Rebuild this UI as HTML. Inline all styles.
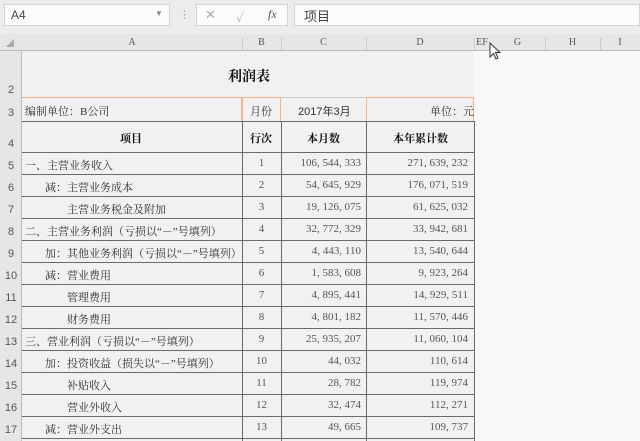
<!DOCTYPE html><html><head><meta charset="utf-8"><style>
*{margin:0;padding:0;box-sizing:border-box}
body{width:640px;height:441px;overflow:hidden;background:#f1f1f1;font-family:"Liberation Sans","Noto Sans CJK SC",sans-serif;position:relative}
.a{position:absolute}
.t{position:absolute;font-size:11px;color:#333;white-space:nowrap;font-family:"Liberation Serif","Noto Serif CJK SC",serif}
.hl{position:absolute;height:1px;background:#6a6a6a}
.vl{position:absolute;width:1px;background:#6a6a6a}
.rn{position:absolute;left:0;width:22px;font-size:11px;color:#555;text-align:center}
.ch{position:absolute;top:37px;font-size:10px;color:#555;text-align:center;font-family:"Liberation Serif",serif}
</style></head><body>
<!-- toolbar -->
<div class="a" style="left:0;top:0;width:640px;height:34px;background:#ececec"></div>
<div class="a" style="left:4px;top:4px;width:166px;height:22px;background:#fbfbfb;border:1px solid #d4d4d4"></div>
<div class="t" style="left:11px;top:8px;font-family:'Liberation Sans';font-size:12px;color:#444">A4</div>
<div class="t" style="left:155px;top:9px;font-size:8px;color:#888">▼</div>
<div class="t" style="left:179px;top:8px;color:#aaa">⋮</div>
<div class="a" style="left:196px;top:4px;width:92px;height:22px;background:#fbfbfb;border:1px solid #d4d4d4"></div>
<div class="t" style="left:205px;top:7px;font-size:13px;color:#aaa">✕</div>
<div class="t" style="left:236px;top:7px;font-size:13px;color:#aaa">✓</div>
<div class="t" style="left:268px;top:7px;font-size:12px;color:#555;font-style:italic">fx</div>
<div class="a" style="left:294px;top:4px;width:346px;height:22px;background:#fbfbfb;border:1px solid #d4d4d4"></div>
<div class="t" style="left:304px;top:6px;font-size:13px;color:#444;font-family:'Noto Sans CJK SC',sans-serif">项目</div>
<!-- col header -->
<div class="a" style="left:0;top:34px;width:640px;height:17px;background:#e6e6e6;border-bottom:1px solid #bbb"></div>
<div class="t" style="left:6px;top:38px;font-size:8px;color:#aaa">◢</div>
<div class="ch" style="left:22px;width:220px">A</div>
<div class="ch" style="left:242px;width:39px">B</div>
<div class="ch" style="left:281px;width:85px">C</div>
<div class="ch" style="left:366px;width:108px">D</div>
<div class="ch" style="left:474px;width:16px">EF</div>
<div class="ch" style="left:490px;width:55px">G</div>
<div class="ch" style="left:545px;width:55px">H</div>
<div class="ch" style="left:600px;width:40px">I</div>
<div class="a" style="left:242px;top:38px;width:1px;height:12px;background:#ccc"></div>
<div class="a" style="left:281px;top:38px;width:1px;height:12px;background:#ccc"></div>
<div class="a" style="left:366px;top:38px;width:1px;height:12px;background:#ccc"></div>
<div class="a" style="left:474px;top:38px;width:1px;height:12px;background:#ccc"></div>
<div class="a" style="left:545px;top:38px;width:1px;height:12px;background:#ccc"></div>
<div class="a" style="left:600px;top:38px;width:1px;height:12px;background:#ccc"></div>
<!-- row header col -->
<div class="a" style="left:0;top:51px;width:22px;height:390px;background:#e6e6e6;border-right:1px solid #bbb"></div>
<div class="a" style="left:474px;top:51px;width:166px;height:390px;background:#f8f8f8"></div>
<!-- cursor -->
<svg class="a" style="left:489px;top:42px" width="14" height="20"><path d="M1 1 L1 15 L4.5 11.5 L7 17 L9 16 L6.5 10.5 L11 10.5 Z" fill="#fff" stroke="#333" stroke-width="1"/></svg>
<!-- title -->
<div class="t" style="left:228px;top:66px;font-size:14px;font-weight:bold;color:#111">利润表</div>
<div class="rn" style="top:84px">2</div>
<!-- row 3 -->
<div class="hl" style="left:22px;top:97px;width:452px;background:#c8c8c8"></div>
<div class="a" style="left:22px;top:97px;width:220px;height:25px;border:1px solid #f0b48a;border-left:none"></div>
<div class="a" style="left:242px;top:97px;width:39px;height:25px;border:1px solid #f0b48a"></div>
<div class="a" style="left:366px;top:97px;width:108px;height:25px;border:1px solid #f0b48a"></div>
<div class="t" style="left:25px;top:103px">编制单位：B公司</div>
<div class="t" style="left:250px;top:103px">月份</div>
<div class="t" style="left:298px;top:103px;font-family:'Liberation Sans','Noto Sans CJK SC'">2017年3月</div>
<div class="t" style="left:430px;top:103px">单位：元</div>
<div class="rn" style="top:107px">3</div>
<!-- table grid -->
<div class="hl" style="left:22px;top:121px;width:452px"></div>
<div class="vl" style="left:242px;top:121px;height:320px"></div>
<div class="vl" style="left:281px;top:121px;height:320px"></div>
<div class="vl" style="left:366px;top:121px;height:320px"></div>
<div class="vl" style="left:474px;top:121px;height:320px"></div>
<div class="t" style="left:120px;top:130px;font-weight:bold;color:#111">项目</div>
<div class="t" style="left:250px;top:130px;font-weight:bold;color:#111">行次</div>
<div class="t" style="left:307px;top:130px;font-weight:bold;color:#111">本月数</div>
<div class="t" style="left:393px;top:130px;font-weight:bold;color:#111">本年累计数</div>
<div class="rn" style="top:138px">4</div>
<div id="rows"></div>
<script>
var d=[["一、主营业务收入",0,"1","106,544,333","271,639,232"],["减：主营业务成本",1,"2","54,645,929","176,071,519"],["主营业务税金及附加",2,"3","19,126,075","61,625,032"],["二、主营业务利润（亏损以“－”号填列）",0,"4","32,772,329","33,942,681"],["加：其他业务利润（亏损以“－”号填列）",1,"5","4,443,110","13,540,644"],["减：营业费用",1,"6","1,583,608","9,923,264"],["管理费用",2,"7","4,895,441","14,929,511"],["财务费用",2,"8","4,801,182","11,570,446"],["三、营业利润（亏损以“－”号填列）",0,"9","25,935,207","11,060,104"],["加：投资收益（损失以“－”号填列）",1,"10","44,032","110,614"],["补贴收入",2,"11","28,782","119,974"],["营业外收入",2,"12","32,474","112,271"],["减：营业外支出",1,"13","49,665","109,737"]];
var h="";
h+='<div class="hl" style="left:22px;top:152px;width:452px"></div>';
for(var i=0;i<d.length;i++){var y=152+22*i,r=d[i];
h+='<div class="hl" style="left:22px;top:'+(y+22)+'px;width:452px"></div>';
h+='<div class="t" style="left:'+(25+[0,20,42][r[1]])+'px;top:'+(y+5)+'px">'+r[0]+'</div>';
h+='<div class="t" style="left:242px;width:39px;text-align:center;top:'+(y+5)+'px;color:#555">'+r[2]+'</div>';
h+='<div class="t" style="left:281px;width:80px;text-align:right;top:'+(y+5)+'px;color:#555">'+r[3].replace(/,/g,", ")+'</div>';
h+='<div class="t" style="left:366px;width:102px;text-align:right;top:'+(y+5)+'px;color:#555">'+r[4].replace(/,/g,", ")+'</div>';
h+='<div class="rn" style="top:'+(y+8)+'px">'+(5+i)+'</div>';}
document.getElementById("rows").outerHTML=h;
</script>
</body></html>
